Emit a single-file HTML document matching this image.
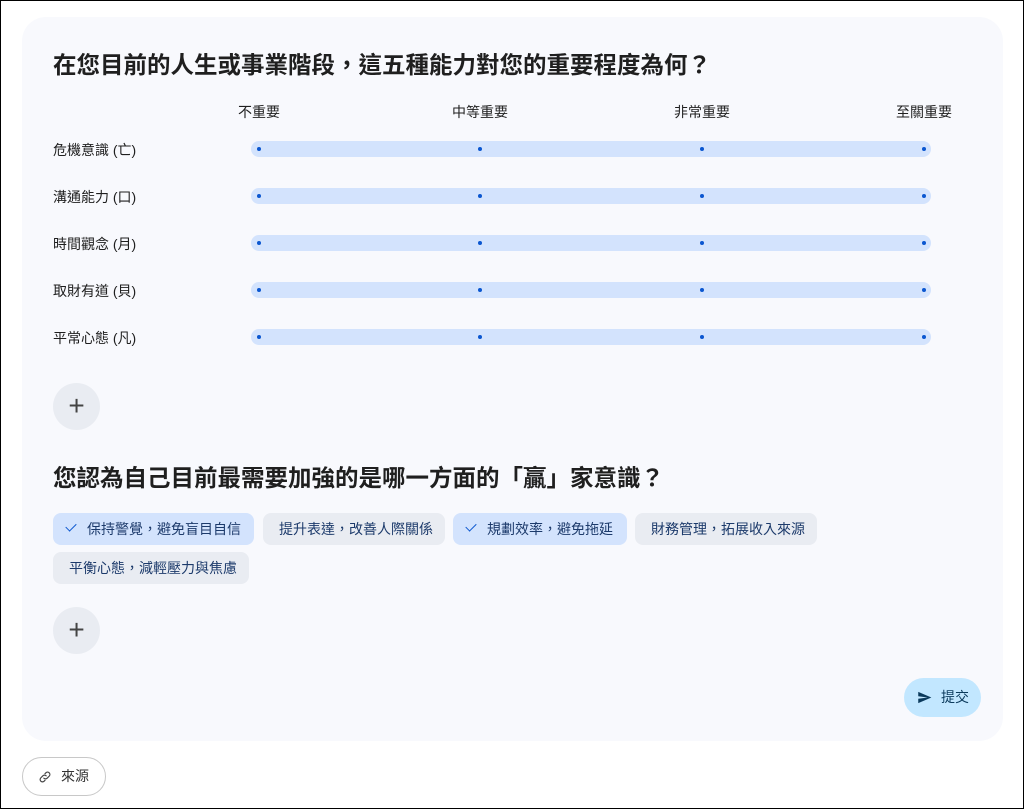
<!DOCTYPE html>
<html><head><meta charset="utf-8"><style>
body{margin:0;width:1024px;height:809px;background:#fff;font-family:"Liberation Sans","Noto Sans CJK TC",sans-serif;position:relative;overflow:hidden;color:#1f1f1f}
.frame{position:absolute;left:0;top:0;width:1022px;height:807px;border:1px solid #000}
.card{position:absolute;left:22px;top:17px;width:981px;height:724px;background:#f8f9fd;border-radius:24px}
.abs{position:absolute}
h2{position:absolute;margin:0;font-size:23.5px;font-weight:700;left:53px;color:#1f1f1f}
.hdr{position:absolute;top:102px;font-size:14px;transform:translateX(-50%);white-space:nowrap}
.lbl{position:absolute;left:53px;font-size:14px}
.track{position:absolute;left:251px;width:680px;height:16px;border-radius:8px;background:#d3e3fd}
.dot{position:absolute;top:6px;width:4px;height:4px;border-radius:50%;background:#0b57d0}
.plus{position:absolute;left:53px;width:47px;height:47px;border-radius:50%;background:#e9ecf2;font-size:28px;font-weight:300;text-align:center;line-height:45px;color:#444}
.chip{position:absolute;height:32px;border-radius:8px;background:#e9ecf2;font-size:14px;line-height:32px;color:#1c3a6b;box-sizing:border-box;padding-left:16px;white-space:nowrap}
.chip.on{background:#d3e3fd;padding-left:34px}
.chip.on:before{content:"";position:absolute;left:13px;top:10px;width:9px;height:5px;border-left:1.6px solid #0b57d0;border-bottom:1.6px solid #0b57d0;transform:rotate(-45deg)}
</style></head><body>
<div class="frame"></div>
<div class="card"></div>
<h2 style="top:46px">在您目前的人生或事業階段，這五種能力對您的重要程度為何？</h2>
<div class="hdr" style="left:259px">不重要</div>
<div class="hdr" style="left:480px">中等重要</div>
<div class="hdr" style="left:702px">非常重要</div>
<div class="hdr" style="left:924px">至關重要</div>

<div class="lbl" style="top:140px">危機意識 (亡)</div>
<div class="track" style="top:141px"><div class="dot" style="left:6px"></div><div class="dot" style="left:227px"></div><div class="dot" style="left:449px"></div><div class="dot" style="left:671px"></div></div>
<div class="lbl" style="top:187px">溝通能力 (口)</div>
<div class="track" style="top:188px"><div class="dot" style="left:6px"></div><div class="dot" style="left:227px"></div><div class="dot" style="left:449px"></div><div class="dot" style="left:671px"></div></div>
<div class="lbl" style="top:234px">時間觀念 (月)</div>
<div class="track" style="top:235px"><div class="dot" style="left:6px"></div><div class="dot" style="left:227px"></div><div class="dot" style="left:449px"></div><div class="dot" style="left:671px"></div></div>
<div class="lbl" style="top:281px">取財有道 (貝)</div>
<div class="track" style="top:282px"><div class="dot" style="left:6px"></div><div class="dot" style="left:227px"></div><div class="dot" style="left:449px"></div><div class="dot" style="left:671px"></div></div>
<div class="lbl" style="top:328px">平常心態 (凡)</div>
<div class="track" style="top:329px"><div class="dot" style="left:6px"></div><div class="dot" style="left:227px"></div><div class="dot" style="left:449px"></div><div class="dot" style="left:671px"></div></div>

<div class="plus" style="top:383px">+</div>
<h2 style="top:459px">您認為自己目前最需要加強的是哪一方面的「贏」家意識？</h2>
<div class="chip on" style="left:53px;top:513px;width:201px">保持警覺，避免盲目自信</div>
<div class="chip" style="left:263px;top:513px;width:182px">提升表達，改善人際關係</div>
<div class="chip on" style="left:453px;top:513px;width:174px">規劃效率，避免拖延</div>
<div class="chip" style="left:635px;top:513px;width:182px">財務管理，拓展收入來源</div>
<div class="chip" style="left:53px;top:552px;width:196px">平衡心態，減輕壓力與焦慮</div>
<div class="plus" style="top:607px">+</div>

<div class="abs" style="left:904px;top:678px;width:77px;height:39px;border-radius:20px;background:#c2e7ff;font-size:14px;line-height:39px;color:#0b3a5c">
<svg style="position:absolute;left:13px;top:12px" width="15" height="15" viewBox="0 0 24 24"><path d="M2 21l21-9L2 3v7l15 2-15 2z" fill="#0b3a5c"/></svg>
<span style="position:absolute;left:37px">提交</span></div>
<div class="abs" style="left:22px;top:757px;width:82px;height:37px;border:1px solid #c8c8c8;border-radius:20px;font-size:14px;line-height:37px;color:#333">
<svg style="position:absolute;left:15px;top:12px" width="14" height="14" viewBox="0 0 24 24" fill="none" stroke="#444" stroke-width="2" stroke-linecap="round"><path d="M10 14a4 4 0 0 0 5.7 0l3.5-3.5a4 4 0 0 0-5.7-5.7L12 6.3"/><path d="M14 10a4 4 0 0 0-5.7 0l-3.5 3.5a4 4 0 0 0 5.7 5.7L12 17.7"/></svg>
<span style="position:absolute;left:38px">來源</span></div>
</body></html>
